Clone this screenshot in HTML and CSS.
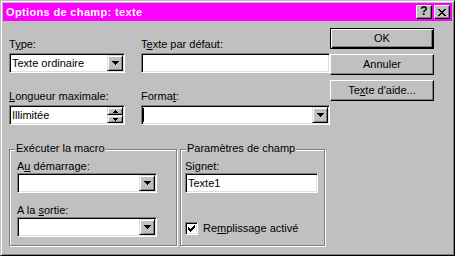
FILE: index.html
```html
<!DOCTYPE html>
<html lang="fr">

<head>
    <meta charset="UTF-8">
    <title>Options de champ: texte</title>
    <link rel="stylesheet" href="styles.css">
</head>

<body>
    <div class="window">
        <div class="caption">
            <span class="caption-title">Options de champ: texte</span>
            <span class="caption-btn help">?</span>
            <span class="caption-btn close">
                <svg width="8" height="7" viewBox="0 0 8 7"><path d="M0 0h2v1H0zM6 0h2v1H6zM1 1h2v1H1zM5 1h2v1H5zM2 2h4v1H2zM3 3h2v1H3zM2 4h4v1H2zM1 5h2v1H1zM5 5h2v1H5zM0 6h2v1H0zM6 6h2v1H6z" fill="#000"/></svg>
            </span>
        </div>

        <div class="client">
            <div class="fields">
                <div class="field-grid">
                    <div class="field">
                        <span class="lbl">T<u>y</u>pe:</span>
                        <div class="sunken">
                            <span class="value">Texte ordinaire</span>
                            <span class="drop-btn">
                                <svg width="7" height="4" viewBox="0 0 7 4"><path d="M0 0h7v1H0zM1 1h5v1H1zM2 2h3v1H2zM3 3h1v1H3z" fill="#000"/></svg>
                            </span>
                        </div>
                    </div>
                    <div class="field">
                        <span class="lbl">T<u>e</u>xte par défaut:</span>
                        <div class="sunken"></div>
                    </div>
                    <div class="field">
                        <span class="lbl"><u>L</u>ongueur maximale:</span>
                        <div class="sunken">
                            <span class="value">Illimitée</span>
                            <span class="spin">
                                <span class="spin-btn">
                                    <svg width="5" height="3" viewBox="0 0 5 3"><path d="M2 0h1v1H2zM1 1h3v1H1zM0 2h5v1H0z" fill="#000"/></svg>
                                </span>
                                <span class="spin-btn">
                                    <svg width="5" height="3" viewBox="0 0 5 3"><path d="M0 0h5v1H0zM1 1h3v1H1zM2 2h1v1H2z" fill="#000"/></svg>
                                </span>
                            </span>
                        </div>
                    </div>
                    <div class="field">
                        <span class="lbl">Forma<u>t</u>:</span>
                        <div class="sunken">
                            <span class="caret"></span>
                            <span class="drop-btn">
                                <svg width="7" height="4" viewBox="0 0 7 4"><path d="M0 0h7v1H0zM1 1h5v1H1zM2 2h3v1H2zM3 3h1v1H3z" fill="#000"/></svg>
                            </span>
                        </div>
                    </div>
                </div>

                <div class="groups">
                    <div class="group group-macro">
                        <span class="legend">Exécuter la macro</span>
                        <div class="group-body">
                            <span class="lbl">A<u>u</u> démarrage:</span>
                            <div class="sunken">
                                <span class="drop-btn">
                                    <svg width="7" height="4" viewBox="0 0 7 4"><path d="M0 0h7v1H0zM1 1h5v1H1zM2 2h3v1H2zM3 3h1v1H3z" fill="#000"/></svg>
                                </span>
                            </div>
                            <span class="lbl lbl-next">A la <u>s</u>ortie:</span>
                            <div class="sunken">
                                <span class="drop-btn">
                                    <svg width="7" height="4" viewBox="0 0 7 4"><path d="M0 0h7v1H0zM1 1h5v1H1zM2 2h3v1H2zM3 3h1v1H3z" fill="#000"/></svg>
                                </span>
                            </div>
                        </div>
                    </div>
                    <div class="group group-champ">
                        <span class="legend">Paramètres de champ</span>
                        <div class="group-body">
                            <span class="lbl">Si<u>g</u>net:</span>
                            <div class="sunken">
                                <span class="value">Texte1</span>
                            </div>
                            <div class="check-row">
                                <span class="checkbox">
                                    <svg width="7" height="7" viewBox="0 0 7 7"><path d="M6 0h1v1H6zM5 1h2v1H5zM0 2h1v1H0zM4 2h3v1H4zM0 3h2v1H0zM3 3h3v1H3zM0 4h5v1H0zM1 5h3v1H1zM2 6h1v1H2z" fill="#000"/></svg>
                                </span>
                                <span>Re<u>m</u>plissage activé</span>
                            </div>
                        </div>
                    </div>
                </div>
            </div>

            <div class="buttons">
                <span class="btn default">OK</span>
                <span class="btn">Annuler</span>
                <span class="btn">Te<u>x</u>te d'aide...</span>
            </div>
        </div>
    </div>
</body>

</html>
```

FILE: styles.css
```css
* {
    margin: 0;
    padding: 0;
    box-sizing: border-box;
}

html,
body {
    width: 455px;
    height: 256px;
    overflow: hidden;
    background: #c0c0c0;
}

body {
    font-family: "Liberation Sans", Arial, sans-serif;
    font-size: 11px;
    line-height: 13px;
    color: #000;
}

u {
    text-underline-offset: 1px;
}

/* window frame */
.window {
    width: 455px;
    height: 256px;
    border: 1px solid;
    border-color: #c0c0c0 #000 #000 #c0c0c0;
    box-shadow: inset 1px 1px #fff, inset -1px -1px #808080;
    padding: 2px;
    display: flex;
    flex-direction: column;
}

.caption {
    height: 18px;
    flex: none;
    display: flex;
    align-items: center;
    padding: 0 2px 0 3px;
    background: #ff00ff;
    color: #fff;
    font-weight: bold;
}

.caption-title {
    flex: 1;
    white-space: nowrap;
    letter-spacing: 0.35px;
}

.caption-btn {
    width: 16px;
    height: 14px;
    display: flex;
    align-items: center;
    justify-content: center;
    background: #c0c0c0;
    color: #000;
    border: 1px solid;
    border-color: #fff #000 #000 #fff;
    box-shadow: inset -1px -1px #808080;
}

.help {
    margin-right: 2px;
    font-size: 12px;
    padding-bottom: 1px;
}

/* dialog body */
.client {
    flex: 1;
    display: flex;
    padding: 7px 10px 0 6px;
}

.fields {
    width: 321px;
    padding-top: 10px;
}

.field-grid {
    display: grid;
    grid-template-columns: 116px 189px;
    column-gap: 16px;
    row-gap: 17px;
}

.field {
    display: flex;
    flex-direction: column;
}

.lbl {
    display: block;
    height: 13px;
    margin-bottom: 2px;
    white-space: nowrap;
}

.sunken {
    height: 20px;
    display: flex;
    align-items: center;
    padding: 1px;
    background: #fff;
    border: 1px solid;
    border-color: #808080 #fff #fff #808080;
    box-shadow: inset 1px 1px #000, inset -1px -1px #dfdfdf;
}

.value {
    flex: 1;
    padding-left: 1px;
    white-space: nowrap;
}

.caret {
    width: 1px;
    height: 14px;
    background: #000;
}

.drop-btn {
    flex: none;
    width: 16px;
    height: 16px;
    margin-left: auto;
    display: flex;
    align-items: center;
    justify-content: center;
    background: #c0c0c0;
    border: 1px solid;
    border-color: #dfdfdf #000 #000 #dfdfdf;
    box-shadow: inset 1px 1px #fff, inset -1px -1px #808080;
}

.spin {
    flex: none;
    width: 16px;
    height: 16px;
    display: flex;
    flex-direction: column;
}

.spin-btn {
    height: 8px;
    display: flex;
    align-items: center;
    justify-content: center;
    background: #c0c0c0;
    border: 1px solid;
    border-color: #dfdfdf #000 #000 #dfdfdf;
    box-shadow: inset 1px 1px #fff, inset -1px -1px #808080;
}

svg {
    display: block;
}

/* group boxes */
.groups {
    display: flex;
    gap: 3px;
    margin-top: 24px;
}

.group {
    height: 97px;
    border: 1px solid #808080;
    box-shadow: inset 1px 1px #fff, 1px 1px #fff;
}

.group-macro {
    width: 168px;
}

.group-champ {
    width: 145px;
}

.legend {
    display: block;
    width: max-content;
    margin: -8px 0 0 5px;
    padding: 0 1px;
    background: #c0c0c0;
}

.group-body {
    padding-top: 5px;
}

.group-body .lbl {
    margin-bottom: 0;
}

.group-body .lbl-next {
    margin-top: 11px;
}

.group-macro .group-body {
    padding-left: 7px;
}

.group-macro .sunken {
    width: 140px;
}

.group-champ .group-body {
    padding-left: 4px;
}

.group-champ .sunken {
    width: 133px;
}

.check-row {
    display: flex;
    align-items: center;
    gap: 5px;
    margin-top: 29px;
    white-space: nowrap;
}

.checkbox {
    width: 13px;
    height: 13px;
    padding: 2px;
    background: #fff;
    border: 1px solid;
    border-color: #808080 #fff #fff #808080;
    box-shadow: inset 1px 1px #000, inset -1px -1px #dfdfdf;
}

/* push buttons */
.buttons {
    width: 104px;
    display: flex;
    flex-direction: column;
    gap: 5px;
}

.btn {
    height: 21px;
    line-height: 19px;
    text-align: center;
    white-space: nowrap;
    background: #c0c0c0;
    border: 1px solid;
    border-color: #fff #000 #000 #fff;
    box-shadow: inset -1px -1px #808080;
}

.btn.default {
    border-color: #000;
    box-shadow: inset 1px 1px #fff, inset -1px -1px #000, inset -2px -2px #808080;
}
```
